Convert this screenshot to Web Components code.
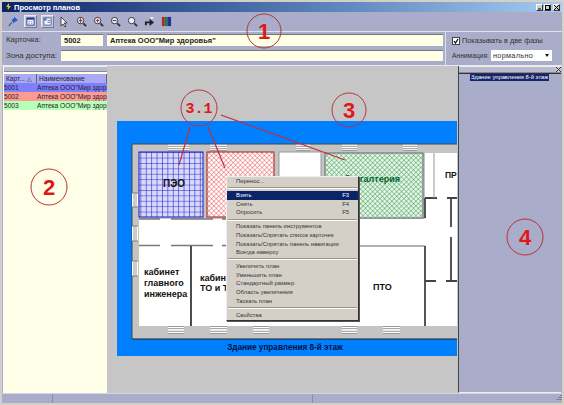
<!DOCTYPE html>
<html lang="ru">
<head>
<meta charset="utf-8">
<title>Просмотр планов</title>
<style>
  html, body { margin: 0; padding: 0; background: #d4d0c8; }
  body { font: 8px "Liberation Sans", Arial, sans-serif; color: #222; overflow: hidden; }
</style>
</head>
<body>
<plan-window>
  <title-bar slot="title">Просмотр планов</title-bar>
  <tool-bar slot="tools"></tool-bar>
  <card-form slot="form"></card-form>
  <card-list slot="left"></card-list>
  <plan-view slot="center"></plan-view>
  <nav-panel slot="right"></nav-panel>
  <status-bar slot="status"></status-bar>
  <plan-marks slot="marks"></plan-marks>
  <ctx-menu slot="menu">
    <menu-item>Перенос...</menu-item>
    <menu-sep></menu-sep>
    <menu-item active key="F3">Взять</menu-item>
    <menu-item key="F4">Снять</menu-item>
    <menu-item key="F5">Опросить</menu-item>
    <menu-sep></menu-sep>
    <menu-item>Показать панель инструментов</menu-item>
    <menu-item>Показать/Спрятать список карточек</menu-item>
    <menu-item>Показать/Спрятать панель навигации</menu-item>
    <menu-item>Всегда наверху</menu-item>
    <menu-sep></menu-sep>
    <menu-item>Увеличить план</menu-item>
    <menu-item>Уменьшить план</menu-item>
    <menu-item>Стандартный размер</menu-item>
    <menu-item>Область увеличения</menu-item>
    <menu-item>Таскать план</menu-item>
    <menu-sep></menu-sep>
    <menu-item>Свойства</menu-item>
  </ctx-menu>
</plan-window>

<script>
// helper, every element below just gives its markup to this
class Base extends HTMLElement {
  constructor() {
    super();
    this.attachShadow({ mode: "open" }).innerHTML = this.markup();
  }
}

class PlanWindow extends Base {
  markup() {
    return `<style>
      :host { display: block; position: relative; width: 564px; height: 405px; overflow: hidden; background: #d4d0c8; }
      .frame { display: flex; flex-direction: column; height: 405px; box-sizing: border-box; padding: 2px; }
      .body { flex: 1; min-height: 0; display: grid; grid-template-columns: 104px 351px 103px; background: #a9adc9; padding-left: 1px; border-top: 1px solid #e6e6ee; }
    </style>
    <div class="frame">
      <slot name="title"></slot>
      <slot name="tools"></slot>
      <slot name="form"></slot>
      <div class="body">
        <slot name="left"></slot>
        <slot name="center"></slot>
        <slot name="right"></slot>
      </div>
      <slot name="status"></slot>
    </div>
    <slot name="marks"></slot>
    <slot name="menu"></slot>`;
  }
}

class TitleBar extends Base {
  markup() {
    return `<style>
      :host { display: flex; align-items: center; height: 10px; padding: 0 2px 0 3px; gap: 2px;
        background: linear-gradient(90deg, #0a246a, #5f86bd 60%, #a6caf0);
        color: #fff; font: bold 7.5px "Liberation Sans", Arial, sans-serif; }
      .txt { flex: 1; }
      .btns { display: flex; gap: 1px; }
      .btns i { width: 7px; height: 7px; background: #d4d0c8; border: 1px solid; border-color: #fff #333 #333 #fff; box-sizing: border-box; display: block; }
      .btns svg { display: block; }
    </style>
    <svg width="7" height="8" viewBox="0 0 7 8"><path d="M4 0L1 4h2L2 8l4-5H4z" fill="#f0c020"/><path d="M1 6h2v2H1z" fill="#223"/></svg>
    <span class="txt"><slot></slot></span>
    <span class="btns">
      <i><svg width="5" height="5"><path d="M1 4h3" stroke="#000"/></svg></i>
      <i><svg width="5" height="5"><rect x="0.5" y="0.5" width="4" height="4" fill="none" stroke="#000"/></svg></i>
      <i style="margin-left:1px"><svg width="5" height="5"><path d="M0 0l5 5M5 0L0 5" stroke="#000"/></svg></i>
    </span>`;
  }
}

class ToolBar extends Base {
  markup() {
    const lens = (extra) => `<svg width="11" height="11" viewBox="0 0 12 12"><circle cx="5" cy="5" r="3.5" fill="#eef" stroke="#333"/><path d="M8 8l3 3" stroke="#333" stroke-width="2"/>${extra}</svg>`;
    return `<style>
      :host { display: flex; align-items: center; height: 20px; padding-left: 2.5px; background: #a9adc9; border-bottom: 1px solid #dfe0ea; box-sizing: border-box; }
      .b { width: 17px; height: 13px; display: flex; align-items: center; justify-content: center; box-sizing: border-box; }
      .on { background: #c6cade; border: 1px solid #e8e9f0; border-right-color: #777a96; border-bottom-color: #777a96; width: 13px; margin: 0 2px; }
    </style>
    <span class="b"><svg width="11" height="11" viewBox="0 0 12 12"><path d="M7 1l4 4-3 1-2 2-2-4 2-1z" fill="#1a5fd0"/><path d="M4 7L1 11" stroke="#123" /></svg></span>
    <span class="b on"><svg width="9" height="9" viewBox="0 0 10 10"><rect x="1" y="1" width="8" height="8" fill="#fff" stroke="#223a8a"/><rect x="1" y="1" width="8" height="2" fill="#223a8a"/><path d="M3 5h1M6 5h1M3 7h1M6 7h1" stroke="#223a8a"/></svg></span>
    <span class="b on"><svg width="9" height="9" viewBox="0 0 10 10"><rect x="1" y="1" width="8" height="8" fill="#f4f6ff" stroke="#567"/><path d="M1 1h3v3H1z" fill="#4a7bd0"/><path d="M5 4h3M5 6h3" stroke="#4a7bd0"/></svg></span>
    <span class="b"><svg width="10" height="12" viewBox="0 0 10 12"><path d="M2 1v9l2-2 2 3 1-1-2-3h3z" fill="#fff" stroke="#222" stroke-width=".8"/></svg></span>
    <span class="b">${lens('<path d="M5 2v6" stroke="#c22"/><path d="M3 5h4" stroke="#333"/>')}</span>
    <span class="b">${lens('<path d="M3 5h4M5 3v4" stroke="#a22"/>')}</span>
    <span class="b">${lens('<path d="M3 5h4" stroke="#222"/>')}</span>
    <span class="b">${lens('')}</span>
    <span class="b"><svg width="11" height="11" viewBox="0 0 12 12"><path d="M1 6h5V3l5 4-5 4V8H3v2H1z" fill="#222"/><path d="M7 1h3v2H7z" fill="#eef"/></svg></span>
    <span class="b"><svg width="11" height="11" viewBox="0 0 12 12"><rect x="1" y="1" width="3" height="10" fill="#c02020"/><rect x="4" y="1" width="3" height="10" fill="#208030"/><rect x="7" y="1" width="4" height="10" fill="#2030a0"/></svg></span>`;
  }
}

class CardForm extends Base {
  markup() {
    return `<style>
      :host { display: grid; grid-template-columns: 444px 1fr; height: 33px; background: #a9adc9; font: 7.8px "Liberation Sans", Arial, sans-serif; color: #333; box-sizing: border-box; }
      .l { display: grid; grid-template-columns: 51px 42px 1fr; gap: 4px; padding: 2px 2px 0 4px; border-right: 1px solid #dfe0ea; align-content: start; }
      .f { height: 12px; background: #ffffe6; border-top: 1px solid #777; box-sizing: border-box; padding-left: 3px; font-weight: bold; font-size: 7.5px; line-height: 11px; color: #222; white-space: nowrap; }
      .wide { grid-column: 2 / 4; height: 11px; }
      .lbl { line-height: 12px; white-space: nowrap; }
      .r { display: grid; grid-template-columns: 39px 61px; padding: 3px 0 0 6px; row-gap: 4px; align-content: start; font-size: 7.3px; }
      .chk { grid-column: 1 / 3; display: flex; align-items: center; gap: 2px; height: 11px; white-space: nowrap; }
      .chk i { width: 6px; height: 6px; background: #fff; border: 1px solid #444; display: block; position: relative; }
      .chk svg { position: absolute; left: 0; top: 0; }
      .sel { height: 11px; background: #fff; display: flex; justify-content: space-between; align-items: center; padding: 0 3px 0 2px; box-sizing: border-box; letter-spacing: .3px; }
      .sel b { width: 0; height: 0; border: 2px solid transparent; border-top: 3px solid #111; border-bottom: 0; }
      .an { line-height: 11px; white-space: nowrap; font-size: 6.7px; }
    </style>
    <div class="l">
      <span class="lbl">Карточка:</span><span class="f">5002</span><span class="f">Аптека ООО"Мир здоровья"</span>
      <span class="lbl">Зона доступа:</span><span class="f wide"></span>
    </div>
    <div class="r">
      <label class="chk"><i><svg width="6" height="6"><path d="M1 3l1.5 2L5 1" fill="none" stroke="#000" stroke-width="1.2"/></svg></i>Показывать в две фазы</label>
      <span class="an">Аннимация:</span>
      <span class="sel">нормально<b></b></span>
    </div>`;
  }
}

class CardList extends Base {
  markup() {
    // name column is narrow in the original, the string ends where the column ends
    const name = 'Аптека ООО"Мир здор';
    return `<style>
      :host { display: flex; flex-direction: column; background: #ffffe8; border-left: 1px solid #fff; font: 6.6px "Liberation Sans", Arial, sans-serif; color: #223; }
      .grip { height: 6px; background: #b9bbcf; border-top: 1px solid #eee; border-bottom: 1px solid #889; box-sizing: border-box; }
      .hd { background: #a9a9f6; height: 9px; margin-top: 2px; display: grid; grid-template-columns: 33px 1fr; line-height: 9px; }
      .hd span { padding-left: 2px; border-right: 1px solid #666; white-space: nowrap; }
      .row { height: 9px; display: grid; grid-template-columns: 33px 1fr; line-height: 9px; white-space: nowrap; }
    </style>
    <div class="grip"></div>
    <div class="hd"><span>Карт... <small>△</small></span><span>Наименование</span></div>
    <div class="row" style="background:#7f7ffb"><span>5001</span><span>${name}</span></div>
    <div class="row" style="background:#ff9a90"><span>5002</span><span>${name}</span></div>
    <div class="row" style="background:#b8ffb8"><span>5003</span><span>${name}</span></div>`;
  }
}

class PlanView extends Base {
  markup() {
    // viewBox is in window coordinates, easier to read off the drawing
    const win = (x, y, w, h) => {
      let s = `<rect x="${x}" y="${y}" width="${w}" height="${h}" fill="#fff"/>`;
      if (w > h) s += `<path d="M${x} ${y + .5}h${w}M${x} ${y + h / 3}h${w}M${x} ${y + 2 * h / 3}h${w}M${x} ${y + h - .5}h${w}" stroke="#555" stroke-width=".6"/>`;
      else s += `<path d="M${x + w / 3} ${y}v${h}M${x + 2 * w / 3} ${y}v${h}M${x} ${y}h${w}M${x} ${y + h}h${w}" stroke="#555" stroke-width=".6"/>`;
      return s;
    };
    return `<style>
      :host { display: block; background: #c6c6c6; overflow: hidden; }
      svg { display: block; }
      text { font-family: "Liberation Sans", Arial, sans-serif; font-weight: bold; fill: #111; }
    </style>
    <svg width="351" height="328" viewBox="107 65 351 328">
      <defs>
        <pattern id="grid" width="5.4" height="5.4" patternUnits="userSpaceOnUse">
          <path d="M0 0h5.4M0 0v5.4" stroke="#1a1ac8" stroke-width="1.1" fill="none"/>
        </pattern>
        <pattern id="redx" width="3.4" height="3.4" patternUnits="userSpaceOnUse" patternTransform="rotate(45)">
          <path d="M0 0h3.4M0 0v3.4" stroke="#e84a4a" stroke-width=".9" fill="none"/>
        </pattern>
        <pattern id="greenx" width="3.4" height="3.4" patternUnits="userSpaceOnUse" patternTransform="rotate(45)">
          <path d="M0 0h3.4M0 0v3.4" stroke="#2f9a4a" stroke-width=".9" fill="none"/>
        </pattern>
      </defs>
      <rect x="117" y="120" width="340" height="235" fill="#0080ff"/>
      <rect x="132" y="143" width="325" height="195" fill="#c4c4c4"/>
      <path d="M132 338V143H457" fill="none" stroke="#444" stroke-width="1"/>
      <path d="M132 338H457" stroke="#222" stroke-width="1"/>

      <!-- white floor of corridor and lower rooms -->
      <rect x="139" y="218" width="318" height="107" fill="#fff"/>
      <rect x="425" y="152" width="32" height="66" fill="#fff"/>

      <rect x="139" y="151" width="64" height="65" fill="#d8d8fa"/>
      <rect x="139" y="151" width="64" height="65" fill="url(#grid)" stroke="#1a1ac8"/>
      <rect x="207" y="151" width="67" height="65" fill="#fff"/>
      <rect x="207" y="151" width="67" height="65" fill="url(#redx)" stroke="#a02020"/>
      <rect x="279" y="151" width="42" height="66" fill="#fff" stroke="#999"/>
      <rect x="325" y="152" width="98" height="65" fill="#e8f4e8"/>
      <rect x="325" y="152" width="98" height="65" fill="url(#greenx)" stroke="#667"/>

      <text x="163" y="186" font-size="10">ПЭО</text>
      <text x="400" y="181" font-size="9" text-anchor="end" style="fill:#063">бухгалтерия</text>
      <text x="445" y="177" font-size="8.500">ПР</text>

      <path d="M139 218h21M171 218h42M222 218h35M139 244.500h21M171 244.500h42M222 244.500h133" stroke="#777" stroke-width="1.500" fill="none"/>
      <path d="M358 245H425" stroke="#999" stroke-width="1.500"/>
      <path d="M191 245V325" stroke="#111" stroke-width="1.500"/>
      <path d="M425 245V325M425 197V217M425 197h12" stroke="#444" stroke-width="1.800" fill="none"/>
      <path d="M451 197v29M451 236v44M425 280h11M446 280h11M447 197h10" stroke="#444" stroke-width="1.800" fill="none"/>
      <path d="M434 152v45" stroke="#999" stroke-width="1"/>

      ${win(168, 143, 21, 7)}${win(210, 143, 17, 7)}${win(296, 143, 14, 7)}${win(342, 143, 15, 7)}${win(403, 143, 14, 7)}
      ${win(132, 192, 6, 14)}${win(132, 225, 6, 15)}${win(132, 260, 6, 15)}
      ${win(168, 325, 16, 8)}${win(210, 325, 17, 8)}${win(253, 325, 16, 8)}${win(342, 325, 15, 8)}${win(383, 325, 17, 8)}

      <text x="144" y="274" font-size="9">кабинет</text>
      <text x="144" y="285" font-size="9">главного</text>
      <text x="144" y="296" font-size="9">инженера</text>
      <text x="200" y="280" font-size="9">кабинет</text>
      <text x="200" y="290" font-size="9">ТО и ТБ</text>
      <text x="373" y="289" font-size="9">ПТО</text>
      <text x="285" y="349" font-size="8.200" text-anchor="middle" style="fill:#001040">Здание управления 8-й этаж</text>
    </svg>`;
  }
}

class NavPanel extends Base {
  markup() {
    return `<style>
      :host { display: flex; flex-direction: column; background: #a9adc9; border-left: 1px solid #444; font: 5.8px "Liberation Sans", Arial, sans-serif; box-sizing: border-box; border-bottom: 1px solid #eee; }
      .grip { height: 7px; background: #b9bbcf; border-top: 1px solid #eee; border-bottom: 1px solid #889; box-sizing: border-box; display: flex; justify-content: flex-end; }
      .grip svg { display: block; background: #c9cbd9; }
      .tree { border-top: 1px solid #333; padding: 0 0 0 11px; }
      .tree span { background: #14246e; color: #fff; display: inline-block; line-height: 7px; white-space: nowrap; padding: 0 1px; vertical-align: top; }
    </style>
    <div class="grip"><svg width="5" height="5"><path d="M0 0l5 5M5 0L0 5" stroke="#333"/></svg></div>
    <div class="tree"><span>Здание управления 8-й этаж</span></div>`;
  }
}

class StatusBar extends Base {
  markup() {
    return `<style>
      :host { display: grid; grid-template-columns: 51px 260px 1fr; height: 10px; background: #a9adc9; border-top: 1px solid #d4d6e2; box-sizing: border-box; }
      span { border-right: 1px solid #8a8da8; }
      span:last-child { border: 0; display: flex; justify-content: flex-end; }
    </style><span></span><span></span><span><svg width="7" height="8"><path d="M6 1v1M4 3v1M6 3v1M2 5v1M4 5v1M6 5v1" stroke="#555"/></svg></span>`;
  }
}

// red marks on top of the screenshot
class PlanMarks extends Base {
  markup() {
    const mark = (x, y, r, t, size) => `<circle cx="${x}" cy="${y}" r="${r}" fill="none" stroke="#b8323c" stroke-width="1"/>
      <text x="${x}" y="${y + size * 0.36}" font-size="${size}" text-anchor="middle">${t}</text>`;
    return `<style>
      :host { display: block; position: absolute; left: 0; top: 0; pointer-events: none; }
      svg { display: block; }
      text { font-family: "Liberation Sans", Arial, sans-serif; fill: #e01818; font-weight: bold; }
      .mono { font-family: "Liberation Mono", monospace; }
    </style>
    <svg width="564" height="405">
      <path d="M190 127L179 165M208 127L225 168M221 115L345 160" stroke="#c0303c" stroke-width="1.200" fill="none"/>
      ${mark(264, 31, 17, "1", 22)}
      <circle cx="199" cy="108" r="18" fill="none" stroke="#b8323c"/>
      <text class="mono" x="199" y="113" font-size="15" text-anchor="middle">3.1</text>
      ${mark(349, 110, 17, "3", 22)}
      ${mark(49, 187, 18, "2", 22)}
      ${mark(525, 237, 18, "4", 22)}
    </svg>`;
  }
}

class CtxMenu extends Base {
  markup() {
    return `<style>
      :host { display: block; position: absolute; left: 226px; top: 176px; width: 133px; height: 145px; box-sizing: border-box;
        background: #d4d0c8; border: 1px solid; border-color: #eee #333 #333 #eee; box-shadow: 1px 1px 0 #555; font: 5.9px "Liberation Sans", Arial, sans-serif; color: #333; }
    </style><slot></slot>`;
  }
}

class MenuItem extends Base {
  markup() {
    return `<style>
      :host { display: flex; justify-content: space-between; height: 8.7px; line-height: 8.7px; padding: 0 9px; white-space: nowrap; }
      :host([active]) { background: #0a246a; color: #fff; }
    </style><span><slot></slot></span><span>${this.getAttribute("key") || ""}</span>`;
  }
}

class MenuSep extends Base {
  markup() {
    return `<style>
      :host { display: block; height: 2px; margin: 1.600px 1px; border-top: 1px solid #99958c; border-bottom: 1px solid #fff; box-sizing: border-box; }
    </style>`;
  }
}

const tags = {
  "plan-window": PlanWindow, "title-bar": TitleBar, "tool-bar": ToolBar, "card-form": CardForm,
  "card-list": CardList, "plan-view": PlanView, "nav-panel": NavPanel, "status-bar": StatusBar,
  "plan-marks": PlanMarks, "ctx-menu": CtxMenu, "menu-item": MenuItem, "menu-sep": MenuSep
};
Object.keys(tags).forEach(t => customElements.define(t, tags[t]));
</script>
</body>
</html>
